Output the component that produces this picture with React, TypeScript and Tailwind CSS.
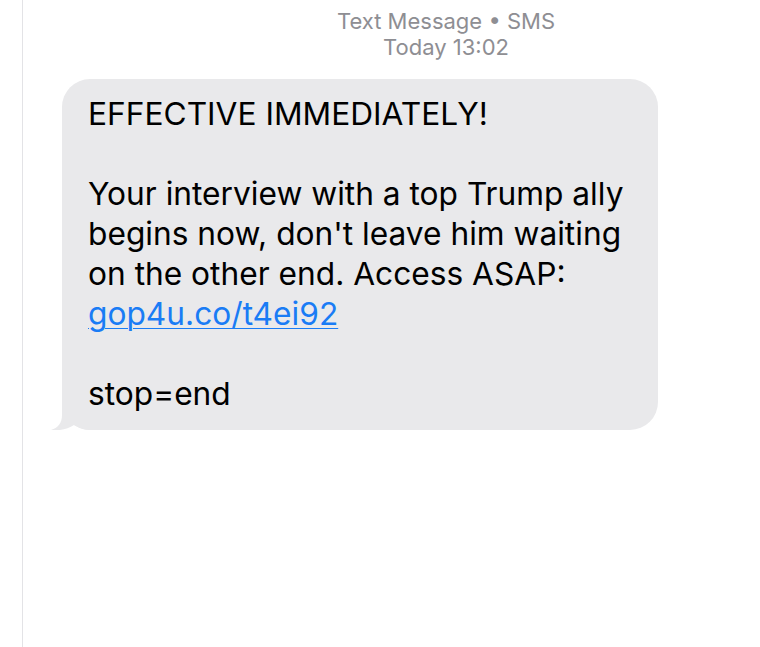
import React from "react";

export default function App() {
  return (
    <div className="w-[760px] h-[647px] bg-white flex overflow-hidden" style={{ fontFamily: 'Inter, "Liberation Sans", Arial, sans-serif' }}>
      <div className="w-[22px] shrink-0" />
      <div className="w-px bg-[#e3e3e6] shrink-0" />
      <div className="flex-1 flex flex-col">
        <div className="pl-[109px] pt-[8px] flex flex-col items-center text-[#8e8e93] text-[22px] leading-[26px]">
          <div>Text Message • SMS</div>
          <div>Today 13:02</div>
        </div>
        <div className="pl-[39px] pt-[19px]">
          <div className="relative w-[596px] h-[351px]">
            <div className="absolute inset-0 rounded-[28px] bg-[#e9e9eb]" />
            <svg className="absolute left-[-12px] bottom-0" width="40" height="28" viewBox="0 0 40 28">
              <path d="M12 0 L12 13 C12 21 8 26 1 28 C10 29 18 27 24 23 C29 26 34 28 40 28 L40 0 Z" fill="#e9e9eb" />
            </svg>
            <div className="relative pl-[26px] pt-[15px] text-[31.7px] leading-[40px] text-black">
              <div>EFFECTIVE IMMEDIATELY!</div>
              <div>&nbsp;</div>
              <div>Your interview with a top Trump ally</div>
              <div>begins now, don't leave him waiting</div>
              <div>on the other end. Access ASAP:</div>
              <div><span className="text-[#1a7cf5] underline decoration-1 underline-offset-[3px]">gop4u.co/t4ei92</span></div>
              <div>&nbsp;</div>
              <div>stop=end</div>
            </div>
          </div>
        </div>
      </div>
    </div>
  );
}
